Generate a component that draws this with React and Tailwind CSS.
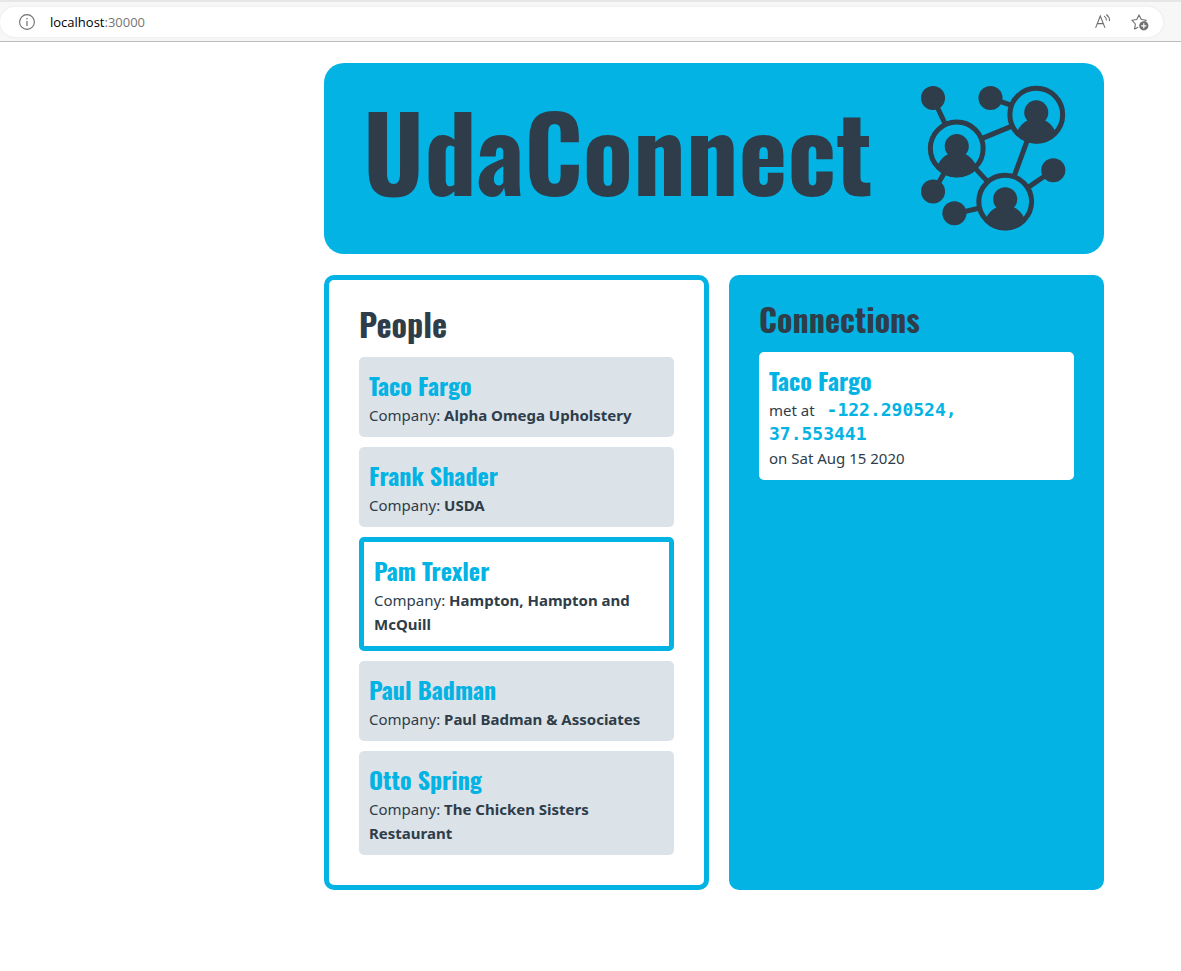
const people = [
  { name: "Taco Fargo", company: "Alpha Omega Upholstery" },
  { name: "Frank Shader", company: "USDA" },
  { name: "Pam Trexler", company: "Hampton, Hampton and McQuill", selected: true },
  { name: "Paul Badman", company: "Paul Badman & Associates" },
  { name: "Otto Spring", company: "The Chicken Sisters Restaurant" },
];

const display = "font-['Oswald','Liberation_Sans_Narrow','Roboto_Condensed',sans-serif] font-bold";

function InfoIcon() {
  return (
    <svg width="16" height="16" viewBox="0 0 16 16" fill="none" stroke="#6e6e6e" aria-hidden="true">
      <circle cx="8" cy="8" r="7.4" strokeWidth="1.1" />
      <path d="M8 7v5" strokeWidth="1.2" />
      <circle cx="8" cy="4.7" r="0.8" fill="#6e6e6e" stroke="none" />
    </svg>
  );
}

function ReadAloudIcon() {
  return (
    <svg width="16" height="16" viewBox="0 0 16 16" fill="none" stroke="#6e6e6e" strokeWidth="1.1" strokeLinecap="round" aria-hidden="true">
      <path d="M0.8 13.4 5.3 2 9.8 13.4M2.4 9.6h5.8" />
      <path d="M9.4 2.4c1.2.8 1.9 2 2 3.6M11.6 0.8c1.9 1.4 2.9 3.3 2.9 5.8" />
    </svg>
  );
}

function FavoriteIcon() {
  return (
    <svg width="18" height="18" viewBox="0 0 18 18" fill="none" stroke="#6e6e6e" strokeWidth="1.1" strokeLinejoin="round" aria-hidden="true">
      <path d="M7.2 14.2 3.6 16l.8-5L.9 7.2l4.9-.7L8 1.9l2.3 4.6 5 .7-1.5 1.4" />
      <circle cx="12.8" cy="12.8" r="4.6" fill="#6e6e6e" stroke="none" />
      <path d="M12.8 10.2v5.2M10.2 12.8h5.2" stroke="#fff" strokeWidth="1.2" />
    </svg>
  );
}

function Person({ cx, cy, id }) {
  return (
    <g>
      <clipPath id={id}>
        <circle cx={cx} cy={cy} r="86" />
      </clipPath>
      <circle cx={cx} cy={cy} r="79" fill="none" stroke="#2e3d49" strokeWidth="15" />
      <circle cx={cx} cy={cy - 7} r="36" />
      <ellipse cx={cx} cy={cy + 75} rx="62" ry="64" clipPath={`url(#${id})`} />
    </g>
  );
}

function NetworkLogo() {
  return (
    <svg className="size-[147px] shrink-0" viewBox="60 76 440 440" fill="#2e3d49" aria-hidden="true">
      <path
        d="M99 115 135 192M271 115 332 136M248 235 335 199M380 245 343 346M227 327 263 366M131 342 110 378M180 458 236 445M386 381 440 344"
        stroke="#2e3d49"
        strokeWidth="15"
      />
      <circle cx="99" cy="115" r="36" />
      <circle cx="271" cy="115" r="36" />
      <circle cx="99" cy="395" r="36" />
      <circle cx="163" cy="460" r="36" />
      <circle cx="459" cy="331" r="36" />
      <Person cx={408} cy={165} id="person-top" />
      <Person cx={170} cy={266} id="person-left" />
      <Person cx={315} cy={425} id="person-bottom" />
    </svg>
  );
}

function AddressBar() {
  return (
    <div className="flex h-[42px] items-center border-t-2 border-b border-t-[#e6e6e6] border-b-[#bdbdbd] bg-[#f7f7f7] pr-[18px]">
      <div className="flex h-[30px] flex-1 items-center rounded-full bg-white pr-[14px] pl-[19px] shadow-[0_0_3px_#e4e4e4]">
        <button type="button" aria-label="View site information">
          <InfoIcon />
        </button>
        <span className="ml-[15px] flex-1 pt-[2px] font-['Open_Sans',sans-serif] text-[13px] text-black">
          localhost<span className="text-[#757575]">:30000</span>
        </span>
        <button type="button" aria-label="Read aloud" className="mr-5">
          <ReadAloudIcon />
        </button>
        <button type="button" aria-label="Add to favorites">
          <FavoriteIcon />
        </button>
      </div>
    </div>
  );
}

function PersonCard({ name, company, selected }) {
  return (
    <button
      type="button"
      aria-pressed={Boolean(selected)}
      className={
        selected
          ? "block w-full rounded-[5px] border-5 border-[#02b3e4] bg-white p-[10px] text-left"
          : "block w-full rounded-[5px] bg-[#dbe2e8] p-[10px] text-left"
      }
    >
      <span className={`${display} block text-2xl leading-9 text-[#02b3e4]`}>{name}</span>
      <span className="block leading-6">
        Company: <strong className="font-bold">{company}</strong>
      </span>
    </button>
  );
}

export default function App() {
  return (
    <div className="min-h-screen bg-white font-['Noto_Sans',sans-serif] text-[15px] text-[#2e3d49]">
      <AddressBar />
      <main className="flex flex-col gap-[21px] pt-[21px] pr-[77px] pb-20 pl-[324px]">
        <header className="flex items-center justify-between rounded-[20px] bg-[#02b3e4] py-[22px] pr-[37px] pl-[39px]">
          <h1 className={`${display} pb-5 text-[104px] leading-none`}>UdaConnect</h1>
          <NetworkLogo />
        </header>
        <div className="flex gap-5">
          <section className="min-w-0 flex-1 rounded-[10px] border-5 border-[#02b3e4] p-[30px]">
            <h2 className={`${display} mb-[19px] text-[32px] leading-7`}>People</h2>
            <ul className="flex flex-col gap-[10px]">
              {people.map((person) => (
                <li key={person.name}>
                  <PersonCard {...person} />
                </li>
              ))}
            </ul>
          </section>
          <section className="min-w-0 flex-1 rounded-[10px] bg-[#02b3e4] p-[30px]">
            <h2 className={`${display} mb-[19px] text-[32px] leading-7`}>Connections</h2>
            <article className="rounded-[5px] bg-white p-[10px]">
              <h3 className={`${display} text-2xl leading-9 text-[#02b3e4]`}>Taco Fargo</h3>
              <p className="leading-6">
                met at{" "}
                <span className="ml-2 font-['DejaVu_Sans_Mono',monospace] text-[18px] leading-6 font-bold text-[#02b3e4]">
                  -122.290524,
                  <br />
                  37.553441
                </span>
              </p>
              <p className="leading-6">on Sat Aug 15 2020</p>
            </article>
          </section>
        </div>
      </main>
    </div>
  );
}
